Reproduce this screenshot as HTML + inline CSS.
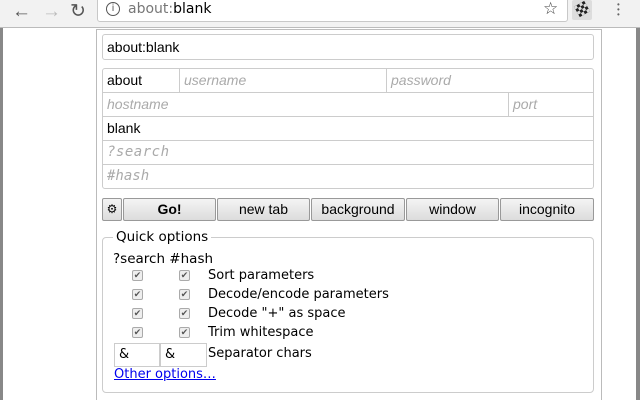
<!DOCTYPE html>
<html style="width:640px;height:400px;overflow:hidden"><head><style>
*{box-sizing:border-box;margin:0;padding:0}
body{width:640px;height:400px;overflow:hidden;background:#fff;font-family:"Liberation Sans",sans-serif;position:relative}
.abs{position:absolute}
.tb{left:0;top:0;width:640px;height:28px;background:#f2f2f2;border-bottom:1px solid #bbb}
.omni{left:97px;top:-3px;width:471px;height:25px;background:#fff;border:1px solid #c8c8c8;border-radius:3px;font-family:"DejaVu Sans",sans-serif;font-size:14px;line-height:23px;padding-left:30px;color:#777}
.pop{left:96px;top:29px;width:506px;height:371px;background:#fff;border:1px solid #bbb;border-bottom:none}
.inp{border:1px solid #ccc;font-size:14px;padding-left:4px;line-height:22px;color:#000}
.ph{color:#aaa;font-style:italic}
.btn{top:198px;height:23px;border:1px solid #999;background:linear-gradient(#f4f4f4,#dcdcdc);font-size:14px;text-align:center;line-height:21px;border-radius:2px}
.cb{width:11px;height:11px;border:1px solid #aaa;border-radius:2px;background:#eee;font-size:9px;line-height:9px;text-align:center;color:#555}
.lbl{font-family:"DejaVu Sans",sans-serif;font-size:13px}
</style></head><body>
<div class="abs" style="left:0;top:0;width:3px;height:400px;background:#888"></div>
<div class="abs" style="left:636px;top:0;width:4px;height:400px;background:#888"></div>
<div class="abs tb"></div>
<div class="abs" style="left:12px;top:1px;font-size:19px;color:#555">&#8592;</div>
<div class="abs" style="left:42px;top:1px;font-size:19px;color:#bbb">&#8594;</div>
<div class="abs" style="left:70px;top:0px;font-size:19px;color:#555">&#8635;</div>
<div class="abs omni"><span class="abs" style="left:8px;top:4px;width:14px;height:14px;border:1.5px solid #555;border-radius:50%;font-size:10px;line-height:11px;text-align:center;color:#555">i</span>about:<span style="color:#000">blank</span></div>
<div class="abs" style="left:543px;top:-1px;font-size:17px;color:#444">&#9734;</div>
<div class="abs" style="left:572px;top:0;width:20px;height:20px;background:#ddd;border-radius:2px"></div>
<div class="abs" style="left:576px;top:3px;width:12px;height:12px;transform:rotate(-30deg);background:repeating-conic-gradient(#222 0 25%,#ddd 0 50%) 0 0/6px 6px"></div>
<div class="abs" style="left:617px;top:2px;width:3px;font-size:8px;line-height:5px;color:#666">&bull;<br>&bull;<br>&bull;</div>
<div class="abs pop"></div>
<div class="abs inp" style="left:102px;top:34px;width:492px;height:26px;border-radius:3px;line-height:24px">about:blank</div>
<div class="abs" style="left:102px;top:68px;width:492px;height:121px;border:1px solid #ccc;border-radius:3px"></div>
<div class="abs" style="left:103px;top:92px;width:490px;height:1px;background:#ccc"></div>
<div class="abs" style="left:103px;top:116px;width:490px;height:1px;background:#ccc"></div>
<div class="abs" style="left:103px;top:140px;width:490px;height:1px;background:#ccc"></div>
<div class="abs" style="left:103px;top:164px;width:490px;height:1px;background:#ccc"></div>
<div class="abs" style="left:179px;top:69px;width:1px;height:23px;background:#ccc"></div>
<div class="abs" style="left:386px;top:69px;width:1px;height:23px;background:#ccc"></div>
<div class="abs" style="left:508px;top:93px;width:1px;height:23px;background:#ccc"></div>
<div class="abs" style="left:107px;top:72px;font-size:14px">about</div>
<div class="abs ph" style="left:184px;top:72px;font-size:14px">username</div>
<div class="abs ph" style="left:391px;top:72px;font-size:14px">password</div>
<div class="abs ph" style="left:107px;top:96px;font-size:14px">hostname</div>
<div class="abs ph" style="left:513px;top:96px;font-size:14px">port</div>
<div class="abs" style="left:107px;top:120px;font-size:14px">blank</div>
<div class="abs ph" style="left:107px;top:144px;font-size:14px;font-family:'DejaVu Sans Mono',monospace;letter-spacing:0.5px">?search</div>
<div class="abs ph" style="left:107px;top:168px;font-size:14px;font-family:'DejaVu Sans Mono',monospace">#hash</div>
<div class="abs btn" style="left:102px;width:20px;font-size:12px">&#9881;</div>
<div class="abs btn" style="left:123px;width:93px;font-weight:bold">Go!</div>
<div class="abs btn" style="left:217px;width:93px">new tab</div>
<div class="abs btn" style="left:311px;width:94px">background</div>
<div class="abs btn" style="left:406px;width:93px">window</div>
<div class="abs btn" style="left:500px;width:94px">incognito</div>
<div class="abs" style="left:102px;top:237px;width:492px;height:156px;border:1px solid #ccc;border-radius:4px"></div>
<div class="abs lbl" style="left:113px;top:229px;background:#fff;padding:0 3px;font-size:13.5px">Quick options</div>
<div class="abs lbl" style="left:113px;top:251px;font-size:13.5px">?search #hash</div>
<div class="abs cb" style="left:132px;top:270px">&#10004;</div><div class="abs cb" style="left:179px;top:270px">&#10004;</div><div class="abs lbl" style="left:208px;top:268px">Sort parameters</div>
<div class="abs cb" style="left:132px;top:289px">&#10004;</div><div class="abs cb" style="left:179px;top:289px">&#10004;</div><div class="abs lbl" style="left:208px;top:287px">Decode/encode parameters</div>
<div class="abs cb" style="left:132px;top:308px">&#10004;</div><div class="abs cb" style="left:179px;top:308px">&#10004;</div><div class="abs lbl" style="left:208px;top:306px">Decode "+" as space</div>
<div class="abs cb" style="left:132px;top:327px">&#10004;</div><div class="abs cb" style="left:179px;top:327px">&#10004;</div><div class="abs lbl" style="left:208px;top:325px">Trim whitespace</div>
<div class="abs inp lbl" style="left:114px;top:343px;width:46px;height:24px">&amp;</div>
<div class="abs inp lbl" style="left:160px;top:343px;width:47px;height:24px">&amp;</div>
<div class="abs lbl" style="left:208px;top:346px">Separator chars</div>
<div class="abs lbl" style="left:114px;top:367px;color:#00e;text-decoration:underline">Other options…</div>
</body></html>
